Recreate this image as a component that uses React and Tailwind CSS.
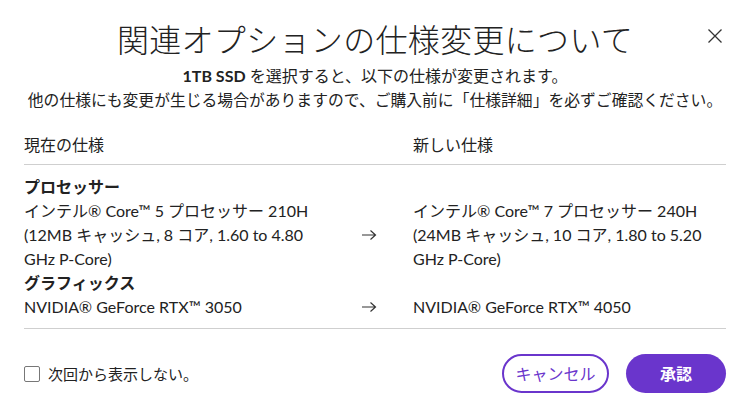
import React from 'react';

function CloseIcon() {
  return (
    <svg className="h-[16px] w-[16px]" viewBox="0 0 16 16" fill="none" stroke="currentColor" strokeWidth="1.3" aria-hidden>
      <path d="M1.5 1.5l13 13M14.5 1.5l-13 13" />
    </svg>
  );
}

function ArrowIcon() {
  return (
    <svg className="h-[12px] w-[16px]" viewBox="0 0 16 12" fill="none" stroke="currentColor" strokeWidth="1.2" aria-hidden>
      <path d="M1 6h13.5M9.5 1.5L14.5 6l-5 4.5" />
    </svg>
  );
}

const specs = [
  {
    label: 'プロセッサー',
    from: 'インテル® Core™ 5 プロセッサー 210H (12MB キャッシュ, 8 コア, 1.60 to 4.80 GHz P-Core)',
    to: 'インテル® Core™ 7 プロセッサー 240H (24MB キャッシュ, 10 コア, 1.80 to 5.20 GHz P-Core)',
  },
  {
    label: 'グラフィックス',
    from: 'NVIDIA® GeForce RTX™ 3050',
    to: 'NVIDIA® GeForce RTX™ 4050',
  },
];

export default function App() {
  return (
    <div className="relative h-[416px] w-[746px] bg-white pl-6 pr-5 pt-5 text-[16px] leading-6 text-[#222] [font-family:Lato,'Noto_Sans_CJK_JP',sans-serif]">
      <button type="button" className="absolute right-[23px] top-[28px] text-[#333]" aria-label="閉じる">
        <CloseIcon />
      </button>

      <h1 className="text-center text-[32px] font-light leading-10 tracking-[0.01em]">
        関連オプションの仕様変更について
      </h1>
      <p className="mt-1 text-center">
        <span className="font-bold">1TB SSD</span> を選択すると、以下の仕様が変更されます。
      </p>
      <p className="-mx-2 whitespace-nowrap text-center text-[15.8px]">
        他の仕様にも変更が生じる場合がありますので、ご購入前に「仕様詳細」を必ずご確認ください。
      </p>

      <div className="mt-[21px] grid grid-cols-[300px_89px_1fr] border-b border-[#cfcfcf] pb-[7px]">
        <span>現在の仕様</span>
        <span />
        <span>新しい仕様</span>
      </div>

      <div className="border-b border-[#cfcfcf] pb-[9px] pt-[10px]">
        {specs.map((s) => (
          <div key={s.label}>
            <div className="font-bold">{s.label}</div>
            <div className="grid grid-cols-[300px_89px_1fr] items-center">
              <span>{s.from}</span>
              <span className="flex justify-center text-[#333]">
                <ArrowIcon />
              </span>
              <span>{s.to}</span>
            </div>
          </div>
        ))}
      </div>

      <div className="mt-[25px] flex items-center justify-between">
        <label className="flex items-center gap-2">
          <span className="h-4 w-4 rounded-[2px] border border-[#777] bg-white" />
          <span className="text-[15px]">次回から表示しない。</span>
        </label>
        <div className="flex gap-[17px]">
          <button
            type="button"
            className="h-[39px] w-[107px] rounded-full border-2 border-[#6a35cc] text-[16px] text-[#6a35cc]"
          >
            キャンセル
          </button>
          <button type="button" className="h-[39px] w-[100px] rounded-full bg-[#6a35cc] text-[16px] font-bold text-white">
            承認
          </button>
        </div>
      </div>
    </div>
  );
}
